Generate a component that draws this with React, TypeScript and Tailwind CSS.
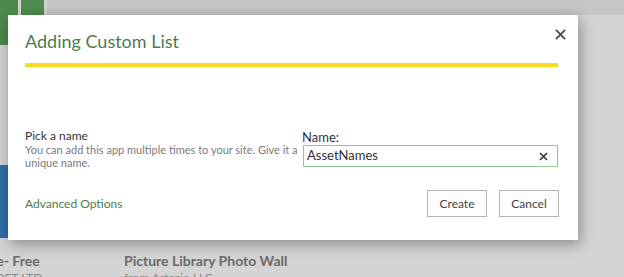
import { useState } from "react";

function AppCard(props: { title: string; vendor: string }) {
    return (
        <div className="w-[86px] shrink-0 flex flex-col">
            <div className="h-[73px] bg-[#2f6fa7]" />
            <p className="mt-[14px] text-[14px] leading-[18px] font-bold text-[#6a6a6a] whitespace-nowrap">{props.title}</p>
            <p className="text-[12px] leading-[16px] text-[#8a8a8a] whitespace-nowrap">{props.vendor}</p>
        </div>
    );
}

function App() {
    const [name, setName] = useState<string>("AssetNames");

    return (
        <div className="relative w-[624px] h-[277px] overflow-hidden bg-[#d4d4d4] font-['Lato',sans-serif]">
            {/* page behind the dialog */}
            <div className="flex flex-col">
                <div className="flex gap-[3px] h-[45px]">
                    <div className="w-[18px] bg-[#4c8a4c]" />
                    <div className="w-[23px] h-[15px] bg-[#4f8c4f]" />
                    <div className="flex-1 h-[15px] bg-[#c6c6c6]" />
                </div>
                <div className="flex gap-[81px] ml-[-43px] mt-[120px]">
                    <AppCard title="Outline- Free" vendor="PLUS SOFT LTD" />
                    <AppCard title="Picture Library Photo Wall" vendor="from Artezio LLC" />
                </div>
            </div>

            {/* dialog */}
            <div className="absolute left-[8px] top-[15px] w-[570px] h-[225px] bg-white shadow-[2px_4px_14px_rgba(0,0,0,0.35)] pl-[17px] pr-[20px] flex flex-col">
                <div className="flex items-start justify-between pt-[15px]">
                    <h1 className="text-[18px] leading-[22px] text-[#4d7c4d]">Adding Custom List</h1>
                    <button className="mt-[-1px] mr-[-8px] text-[#444]">
                        <svg width="11" height="11" viewBox="0 0 12 12">
                            <path d="M1 1 L11 11 M11 1 L1 11" stroke="#444" strokeWidth="1.8" />
                        </svg>
                    </button>
                </div>
                <div className="mt-[11px] h-[4px] bg-[#f5dd1d]" />

                <div className="flex mt-[61px]">
                    <div className="w-[277px]">
                        <p className="text-[12px] leading-[15px] text-[#333]">Pick a name</p>
                        <p className="text-[11px] leading-[13px] text-[#7a7a7a]">
                            You can add this app multiple times to your site. Give it a unique name.
                        </p>
                    </div>
                    <div className="flex-1">
                        <p className="text-[13px] leading-[16px] mt-[1px] text-[#333]">Name:</p>
                        <div className="ml-[1px] h-[22px] border border-[#8fc98f] flex items-center pl-[3px] pr-[9px]">
                            <input
                                value={name}
                                onChange={(e) => setName(e.target.value)}
                                className="flex-1 text-[13px] text-[#333] outline-none bg-transparent"
                            />
                            <svg width="9" height="9" viewBox="0 0 9 9">
                                <path d="M1 1 L8 8 M8 1 L1 8" stroke="#333" strokeWidth="1.6" />
                            </svg>
                        </div>
                    </div>
                </div>

                <div className="flex items-center justify-between mt-[21px]">
                    <a className="text-[12px] text-[#4d7c4d] cursor-pointer">Advanced Options</a>
                    <div className="flex gap-[12px] mr-[-1px]">
                        <button className="w-[60px] h-[27px] border border-[#b5b5b5] bg-[#fdfdfd] text-[12px] text-[#444]">Create</button>
                        <button className="w-[60px] h-[27px] border border-[#b5b5b5] bg-[#fdfdfd] text-[12px] text-[#444]">Cancel</button>
                    </div>
                </div>
            </div>
        </div>
    );
}

export default App;
